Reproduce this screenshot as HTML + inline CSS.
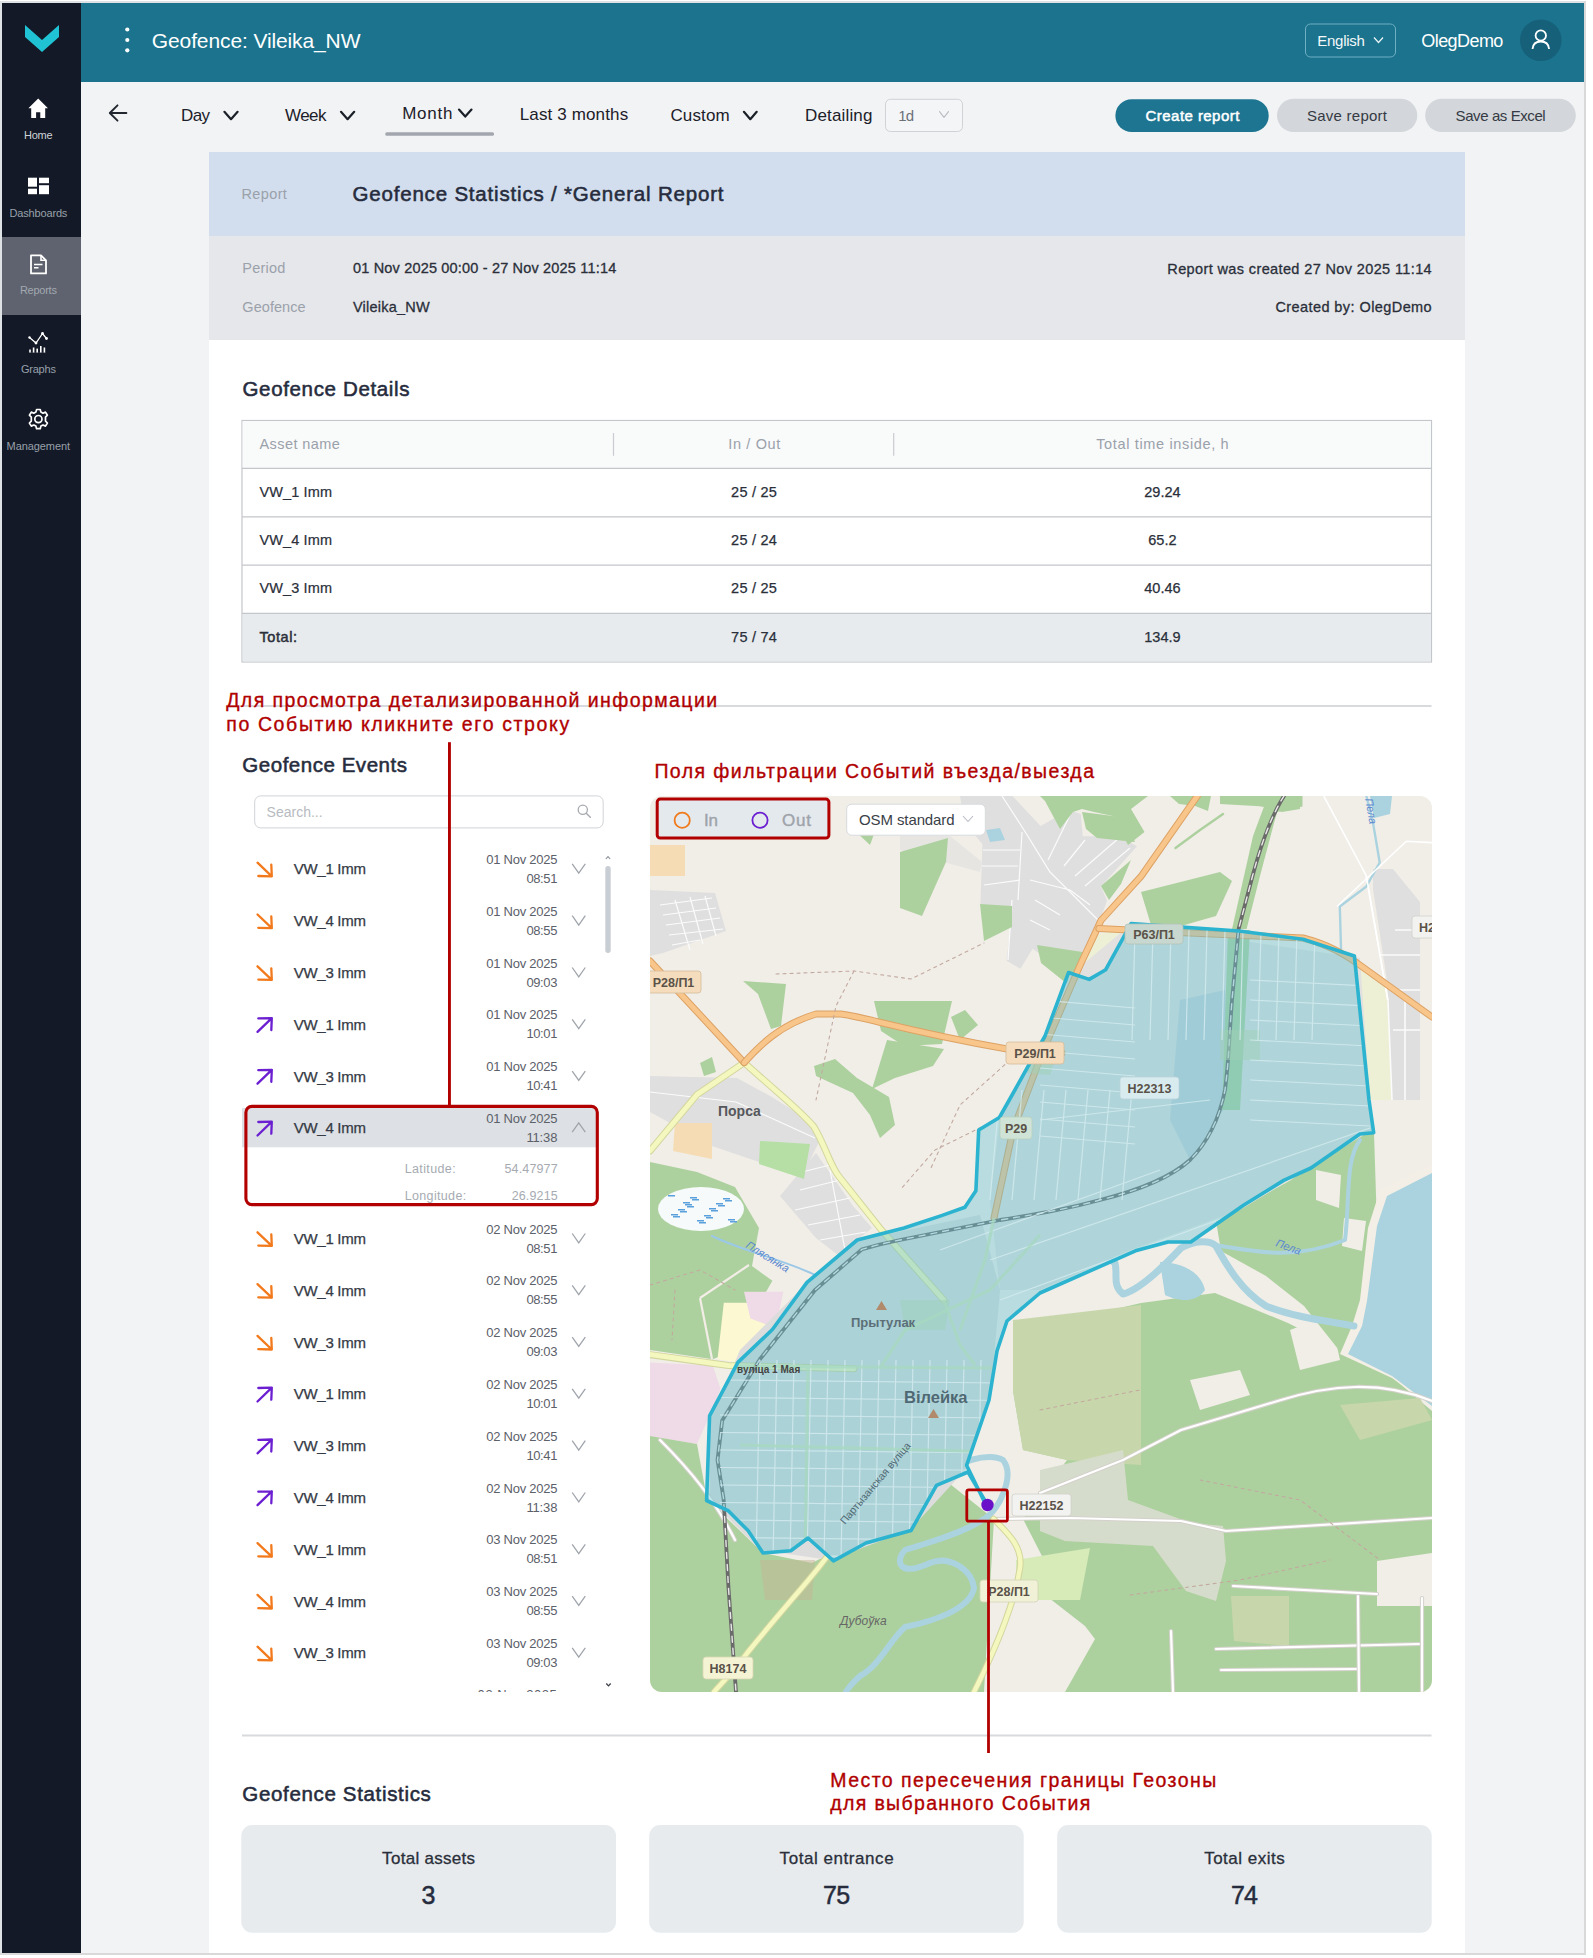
<!DOCTYPE html>
<html><head><meta charset="utf-8"><title>Geofence report</title>
<style>
html,body{margin:0;padding:0;width:1593px;height:1958px;overflow:hidden;background:#fff;}
body{position:relative;font-family:"Liberation Sans", sans-serif;}
div{box-sizing:border-box;}
svg{position:absolute;overflow:visible;}
</style></head><body>
<div style="position:absolute;left:0px;top:0px;width:1593px;height:1958px;background:#ffffff;"></div>
<div style="position:absolute;left:0px;top:1px;width:1586px;height:1954px;background:#d9d9d9;"></div>
<div style="position:absolute;left:0px;top:1px;width:1584px;height:1952px;background:#dfe2e5;"></div>
<div style="position:absolute;left:2px;top:3px;width:1582px;height:1950px;background:#f2f3f5;"></div>
<div style="position:absolute;left:2px;top:3px;width:79px;height:1950px;background:#131926;"></div>
<div style="position:absolute;left:2px;top:237px;width:79px;height:78px;background:#5e636f;"></div>
<div style="position:absolute;left:81px;top:3px;width:1503px;height:79px;background:#1b738d;"></div>
<div style="position:absolute;left:209px;top:152px;width:1256px;height:1801px;background:#ffffff;"></div>
<div style="position:absolute;left:209px;top:152px;width:1256px;height:84px;background:#d2deed;"></div>
<div style="position:absolute;left:209px;top:236px;width:1256px;height:104px;background:#e6e7ea;"></div>
<svg style="left:0;top:0" width="90" height="460" viewBox="0 0 90 460"><polygon points="25,25 42,40 59,25 59,37 42,52 25,37" fill="#1fc3d3"/><path d="M38.2,98.6 L48,108.2 L45.2,108.2 L45.2,118 L40.3,118 L40.3,112.3 L36.1,112.3 L36.1,118 L31.2,118 L31.2,108.2 L28.4,108.2 Z" fill="#ffffff"/><rect x="28" y="177.7" width="9" height="9" fill="#fff"/><rect x="28" y="188.7" width="9" height="5.5" fill="#fff"/><rect x="39" y="177.7" width="10" height="5.5" fill="#fff"/><rect x="39" y="185.2" width="10" height="9" fill="#fff"/><path d="M31,255.3 L41,255.3 L46,260.3 L46,273.4 L31,273.4 Z" fill="none" stroke="#fff" stroke-width="1.8" stroke-linejoin="round"/><path d="M41,255.3 L41,260.3 L46,260.3" fill="none" stroke="#fff" stroke-width="1.6"/><path d="M34,264.5 L42.5,264.5 M34,267.8 L38.5,267.8" stroke="#fff" stroke-width="1.4"/><polyline points="29.5,337.5 36,343 42.5,333.5 46.5,338.5" fill="none" stroke="#fff" stroke-width="1.3"/><circle cx="36" cy="343" r="1.4" fill="#fff"/><circle cx="42.5" cy="333.5" r="1.4" fill="#fff"/><circle cx="46.5" cy="338.5" r="1.4" fill="#fff"/><circle cx="29.5" cy="337.5" r="1.2" fill="#fff"/><rect x="29.2" y="349.5" width="1.6" height="3" fill="#fff"/><rect x="32.8" y="347.5" width="1.6" height="5" fill="#fff"/><rect x="36.4" y="348.6" width="1.6" height="3.9" fill="#fff"/><rect x="40" y="346" width="1.6" height="6.5" fill="#fff"/><rect x="43.6" y="347.5" width="1.6" height="5" fill="#fff"/><rect x="29" y="352" width="17" height="0.1" fill="#fff"/><g transform="translate(38.4,419.1)" fill="none" stroke="#fff" stroke-width="1.7"><path d="M-1.8,-9.6 L1.8,-9.6 L2.5,-7 L4.6,-5.9 L7.1,-7 L9.0,-3.9 L7.1,-2.0 L7.1,2.0 L9.0,3.9 L7.1,7 L4.6,5.9 L2.5,7 L1.8,9.6 L-1.8,9.6 L-2.5,7 L-4.6,5.9 L-7.1,7 L-9.0,3.9 L-7.1,2.0 L-7.1,-2.0 L-9.0,-3.9 L-7.1,-7 L-4.6,-5.9 L-2.5,-7 Z" stroke-linejoin="round"/><circle r="3.6"/></g></svg>
<svg style="left:0;top:0" width="1593" height="82"><circle cx="127.3" cy="29.5" r="2.1" fill="#fff"/><circle cx="127.3" cy="40" r="2.1" fill="#fff"/><circle cx="127.3" cy="50.3" r="2.1" fill="#fff"/><rect x="1305.5" y="24" width="90" height="33" rx="5" fill="none" stroke="#6fb0c4" stroke-width="1"/><polyline points="1374,37.5 1378.5,42.5 1383,37.5" fill="none" stroke="#e8f3f6" stroke-width="1.3"/><circle cx="1540.8" cy="40.2" r="20.8" fill="#16607a"/><circle cx="1540.8" cy="35.5" r="5.2" fill="none" stroke="#fff" stroke-width="1.8"/><path d="M1532.5,49 C1533,43.5 1536.5,41.5 1540.8,41.5 C1545,41.5 1548.6,43.5 1549.1,49" fill="none" stroke="#fff" stroke-width="1.8"/></svg>
<svg style="left:0;top:82" width="1593" height="70" viewBox="0 82 1593 70"><path d="M126.4,113 L110,113 M117.5,105.3 L109.8,113 L117.5,120.7" fill="none" stroke="#22262e" stroke-width="1.9" stroke-linecap="round" stroke-linejoin="round"/><polyline points="224.4,111.8 231.0,119.2 237.6,111.8" fill="none" stroke="#1b1f27" stroke-width="2.2" stroke-linecap="round" stroke-linejoin="round"/><polyline points="341,111.8 347.6,119.2 354.2,111.8" fill="none" stroke="#1b1f27" stroke-width="2.2" stroke-linecap="round" stroke-linejoin="round"/><polyline points="459,109.6 465.25,116.6 471.5,109.6" fill="none" stroke="#1b1f27" stroke-width="2.2" stroke-linecap="round" stroke-linejoin="round"/><polyline points="743.9,111.8 750.3,119.2 756.7,111.8" fill="none" stroke="#1b1f27" stroke-width="2.2" stroke-linecap="round" stroke-linejoin="round"/><rect x="385.3" y="132.2" width="108.7" height="3.6" rx="1.5" fill="#a3a6ad"/><rect x="885.5" y="99.3" width="77" height="32.2" rx="5" fill="#f4f5f6" stroke="#cfd2d6" stroke-width="1"/><polyline points="939.5,111.6 944.0,117.4 948.5,111.6" fill="none" stroke="#b9bcc2" stroke-width="1.1" stroke-linecap="round" stroke-linejoin="round"/><rect x="1115.4" y="99.3" width="153.3" height="32.7" rx="16.3" fill="#1d7591"/><rect x="1277" y="98.8" width="140.3" height="33.2" rx="16.6" fill="#d3d6da"/><rect x="1425.2" y="98.8" width="150.6" height="33.2" rx="16.6" fill="#d3d6da"/></svg>
<svg style="left:0;top:0" width="1593" height="700"><rect x="242" y="420.5" width="1189.5" height="241.5" fill="#ffffff" stroke="#c3c6ca" stroke-width="1.2"/><rect x="242.6" y="421.1" width="1188.3" height="47" fill="#f9fafa"/><rect x="242.6" y="613.6" width="1188.3" height="47.8" fill="#e7ebee"/><path d="M242,468.3 H1431.5 M242,516.8 H1431.5 M242,565.2 H1431.5 M242,613.4 H1431.5" stroke="#c3c6ca" stroke-width="1.2"/><path d="M613.5,433 V455.7 M893.7,433 V455.7" stroke="#c9ccd0" stroke-width="1.2"/><path d="M242,706 H1431.5" stroke="#d8dadd" stroke-width="1.8"/></svg>
<svg style="left:0;top:0" width="1593" height="1958"><rect x="254.7" y="795.9" width="348.5" height="32" rx="6" fill="#fff" stroke="#d0d3d7" stroke-width="1"/><circle cx="582.8" cy="809.8" r="4.6" fill="none" stroke="#a6aab0" stroke-width="1.3"/><path d="M586.2,813.2 L590.3,817.3" stroke="#a6aab0" stroke-width="1.4" stroke-linecap="round"/></svg>
<svg style="left:0;top:0" width="1593" height="1958"><defs><clipPath id="lc"><rect x="236" y="840" width="370" height="851.5"/></clipPath></defs><rect x="242" y="1108" width="354.5" height="39.3" fill="#dde0e4"/><g clip-path="url(#lc)"><path d="M257.5,862.7 L271.8,876.3 M271.3,864.7 L271.8,876.3 L258.3,876.0" fill="none" stroke="#f27a1c" stroke-width="2.3" stroke-linecap="round" stroke-linejoin="round"/><polyline points="572.2,863.9 578.75,873.2 585.3,863.9" fill="none" stroke="#a0a5ac" stroke-width="1.3"/><path d="M257.5,914.5 L271.8,928.1 M271.3,916.5 L271.8,928.1 L258.3,927.8" fill="none" stroke="#f27a1c" stroke-width="2.3" stroke-linecap="round" stroke-linejoin="round"/><polyline points="572.2,915.7 578.75,925.0 585.3,915.7" fill="none" stroke="#a0a5ac" stroke-width="1.3"/><path d="M257.5,966.3 L271.8,979.9 M271.3,968.3 L271.8,979.9 L258.3,979.6" fill="none" stroke="#f27a1c" stroke-width="2.3" stroke-linecap="round" stroke-linejoin="round"/><polyline points="572.2,967.5 578.75,976.8 585.3,967.5" fill="none" stroke="#a0a5ac" stroke-width="1.3"/><path d="M257.5,1031.9 L271.8,1018.1 M258.3,1018.4 L271.8,1018.1 L271.3,1030.1" fill="none" stroke="#6b1fd1" stroke-width="2.3" stroke-linecap="round" stroke-linejoin="round"/><polyline points="572.2,1019.3 578.75,1028.6 585.3,1019.3" fill="none" stroke="#a0a5ac" stroke-width="1.3"/><path d="M257.5,1083.7 L271.8,1069.9 M258.3,1070.2 L271.8,1069.9 L271.3,1081.9" fill="none" stroke="#6b1fd1" stroke-width="2.3" stroke-linecap="round" stroke-linejoin="round"/><polyline points="572.2,1071.1 578.75,1080.4 585.3,1071.1" fill="none" stroke="#a0a5ac" stroke-width="1.3"/><path d="M257.5,1135.5 L271.8,1121.7 M258.3,1122.0 L271.8,1121.7 L271.3,1133.7" fill="none" stroke="#6b1fd1" stroke-width="2.3" stroke-linecap="round" stroke-linejoin="round"/><polyline points="572.2,1132.2 578.75,1122.9 585.3,1132.2" fill="none" stroke="#a0a5ac" stroke-width="1.3"/><path d="M257.5,1232.3 L271.8,1245.9 M271.3,1234.3 L271.8,1245.9 L258.3,1245.6" fill="none" stroke="#f27a1c" stroke-width="2.3" stroke-linecap="round" stroke-linejoin="round"/><polyline points="572.2,1233.5 578.75,1242.8 585.3,1233.5" fill="none" stroke="#a0a5ac" stroke-width="1.3"/><path d="M257.5,1284.1 L271.8,1297.7 M271.3,1286.1 L271.8,1297.7 L258.3,1297.4" fill="none" stroke="#f27a1c" stroke-width="2.3" stroke-linecap="round" stroke-linejoin="round"/><polyline points="572.2,1285.3 578.75,1294.6 585.3,1285.3" fill="none" stroke="#a0a5ac" stroke-width="1.3"/><path d="M257.5,1335.9 L271.8,1349.5 M271.3,1337.9 L271.8,1349.5 L258.3,1349.2" fill="none" stroke="#f27a1c" stroke-width="2.3" stroke-linecap="round" stroke-linejoin="round"/><polyline points="572.2,1337.1 578.75,1346.4 585.3,1337.1" fill="none" stroke="#a0a5ac" stroke-width="1.3"/><path d="M257.5,1401.5 L271.8,1387.7 M258.3,1388.0 L271.8,1387.7 L271.3,1399.7" fill="none" stroke="#6b1fd1" stroke-width="2.3" stroke-linecap="round" stroke-linejoin="round"/><polyline points="572.2,1388.9 578.75,1398.2 585.3,1388.9" fill="none" stroke="#a0a5ac" stroke-width="1.3"/><path d="M257.5,1453.3 L271.8,1439.5 M258.3,1439.8 L271.8,1439.5 L271.3,1451.5" fill="none" stroke="#6b1fd1" stroke-width="2.3" stroke-linecap="round" stroke-linejoin="round"/><polyline points="572.2,1440.7 578.75,1450.0 585.3,1440.7" fill="none" stroke="#a0a5ac" stroke-width="1.3"/><path d="M257.5,1505.1 L271.8,1491.3 M258.3,1491.6 L271.8,1491.3 L271.3,1503.3" fill="none" stroke="#6b1fd1" stroke-width="2.3" stroke-linecap="round" stroke-linejoin="round"/><polyline points="572.2,1492.5 578.75,1501.8 585.3,1492.5" fill="none" stroke="#a0a5ac" stroke-width="1.3"/><path d="M257.5,1543.1 L271.8,1556.7 M271.3,1545.1 L271.8,1556.7 L258.3,1556.4" fill="none" stroke="#f27a1c" stroke-width="2.3" stroke-linecap="round" stroke-linejoin="round"/><polyline points="572.2,1544.3 578.75,1553.6 585.3,1544.3" fill="none" stroke="#a0a5ac" stroke-width="1.3"/><path d="M257.5,1594.9 L271.8,1608.5 M271.3,1596.9 L271.8,1608.5 L258.3,1608.2" fill="none" stroke="#f27a1c" stroke-width="2.3" stroke-linecap="round" stroke-linejoin="round"/><polyline points="572.2,1596.1 578.75,1605.4 585.3,1596.1" fill="none" stroke="#a0a5ac" stroke-width="1.3"/><path d="M257.5,1646.7 L271.8,1660.3 M271.3,1648.7 L271.8,1660.3 L258.3,1660.0" fill="none" stroke="#f27a1c" stroke-width="2.3" stroke-linecap="round" stroke-linejoin="round"/><polyline points="572.2,1647.9 578.75,1657.2 585.3,1647.9" fill="none" stroke="#a0a5ac" stroke-width="1.3"/><path d="M257.5,1698.5 L271.8,1712.1 M271.3,1700.5 L271.8,1712.1 L258.3,1711.8" fill="none" stroke="#f27a1c" stroke-width="2.3" stroke-linecap="round" stroke-linejoin="round"/><polyline points="572.2,1699.7 578.75,1709.0 585.3,1699.7" fill="none" stroke="#a0a5ac" stroke-width="1.3"/></g><rect x="605.3" y="866" width="5.4" height="87" rx="2.7" fill="#c9ced4"/><polyline points="605.8,859 608,856.6 610.2,859" fill="none" stroke="#8a8f96" stroke-width="1.1"/><polyline points="606.3,1683.5 608.5,1685.9 610.7,1683.5" fill="none" stroke="#3b3f46" stroke-width="1.3"/><rect x="245.9" y="1106.4" width="351.4" height="98.2" rx="6" fill="none" stroke="#b20000" stroke-width="3.1"/><rect x="448" y="742.2" width="2.9" height="364" fill="#b20000"/></svg>
<div style="position:absolute;left:470px;top:1686px;width:87.4px;height:5.5px;overflow:hidden"><div style="position:absolute;right:0;top:1.5px;font-size:13px;line-height:13px;color:#5b6069;letter-spacing:0.55px;white-space:nowrap">03 Nov 2025</div></div>
<svg style="left:0;top:0" width="1593" height="1958"><path d="M242,1735.5 H1431.5" stroke="#d8dadd" stroke-width="1.8"/><rect x="241.3" y="1825" width="374.7" height="107.8" rx="11" fill="#e7ebee"/><rect x="649.2" y="1825" width="374.5" height="107.8" rx="11" fill="#e7ebee"/><rect x="1057.2" y="1825" width="374.5" height="107.8" rx="11" fill="#e7ebee"/></svg>
<svg style="left:650px;top:796px" width="782" height="896" viewBox="650 796 782 896"><defs><clipPath id="mc"><rect x="650" y="796" width="782" height="896" rx="12"/></clipPath></defs><g clip-path="url(#mc)"><rect x="650" y="796" width="782" height="896" fill="#f1eee8"/><polygon points="650,890 715,893 726,931 663,953 650,956" fill="#e0dfdf" /><path d="M660,905 L712,898 M663,915 L716,908 M666,925 L720,918 M669,935 L723,929 M672,945 L700,940 M675,900 L690,950 M690,897 L703,944 M705,896 L716,936" fill="none" stroke="#fbfbfb" stroke-width="1.2"/><polygon points="960,796 1012.5,796 1040.6,826 1068.7,810 1080.8,814 1082.8,836.2 1119,836.2 1137,846.2 1101,886.4 1107,900.5 1088.8,952.7 1052.7,962.7 1032.6,948.7 1020.5,968.8 1006.5,960.7 1012.5,908.5 980.4,904.5 982.4,844.2 964.3,822.1" fill="#e0dfdf" /><polygon points="900,836 950,836 982,862 980,872 900,850" fill="#e6e5e2" /><path d="M1002,796 L1024,830 L1050,872 L1098,920 M983,850 L1020,850 M982,866 L1018,866 M984,885 L1020,880 M1022,832 L1018,900 M1030,880 L1070,890 L1090,905 M1035,900 L1060,915 M1030,920 L1050,930 M1048,860 L1070,815 M1064,866 L1085,840 M1075,876 L1119,838 M1085,886 L1130,848 M1012,900 L1008,960" fill="none" stroke="#fbfbfb" stroke-width="1.2"/><polygon points="650,845 685,845 685,876 650,876" fill="#f5dcb4" /><polygon points="1354,956 1392,986 1392,1100 1367,1100" fill="#eef0d5" /><polygon points="1078,980 1095,935 1128,928 1110,970 1090,980" fill="#eef0d5" /><polygon points="1373,869 1393,869 1420,902 1420,1100 1392,1100 1387,981 1373,889" fill="#e0dfdf" /><path d="M1366,876 L1388,1000 L1392,1100 M1395,930 L1420,930 M1380,955 L1420,955 M1393,990 L1420,990 M1393,1030 L1420,1030 M1405,1000 L1405,1100" fill="none" stroke="#fbfbfb" stroke-width="1.6"/><polygon points="900,852 948,838 946,862 922,916 900,908" fill="#add19e" /><polygon points="980,904 1012,906 1012,927 984,941" fill="#add19e" /><polygon points="1040,796 1148,796 1131,809 1144.5,832 1128,845 1113,816 1094,812 1082,809 1073,812 1060,829 1045,801" fill="#add19e" /><polygon points="1082,812 1113,816 1131,833 1135,842 1097,838 1086,829" fill="#add19e" /><polygon points="1170,796 1211,796 1208,811 1195,806 1179,804" fill="#add19e" /><polygon points="1219,796 1300,796 1300,809 1282,812 1265,807 1236,802" fill="#add19e" /><polygon points="1101,886 1131,860 1121,884 1109,900" fill="#add19e" /><polygon points="1141,892 1220,872 1232,881 1216,916 1181,926 1151,925" fill="#add19e" /><polygon points="1037,945 1089,953 1071,987 1041,963" fill="#add19e" /><polygon points="1220,796 1302.5,796 1302.5,806.6 1277,812 1260,876 1246.6,929 1232,929 1253,836 1264,806.6 1220,804" fill="#add19e" /><path d="M1175.5,848 L1200,830 L1223,814" fill="none" stroke="#add19e" stroke-width="2.5" stroke-linecap="round" stroke-linejoin="round" /><polygon points="854,830 880,818 870,845" fill="#add19e" /><polygon points="743,981 786,984 781,1026 771,1029 758,994" fill="#add19e" /><polygon points="874,1001 952,1001 942,1044 904,1046 881,1031" fill="#add19e" /><polygon points="951,1017 965,1010 978,1025 960,1040" fill="#add19e" /><polygon points="814,1066 835,1059 857,1078 889,1097 895,1125 880,1138 870,1115 853,1093 816,1076" fill="#add19e" /><polygon points="887,1040 944,1049 933,1066 895,1078 872,1089" fill="#add19e" /><polygon points="700,1063 712,1057 716,1072 704,1076" fill="#add19e" /><path d="M1366.4,796 L1373,822.6 L1379.7,862.5 L1366.4,886.5 L1339.8,906.5 L1341,947.7 L1342,1100" fill="none" stroke="#aad3df" stroke-width="2.4" stroke-linecap="round" stroke-linejoin="round" /><polygon points="1370,796 1392,796 1390,814 1374,818" fill="#aad3df" /><path d="M1323.8,796 L1366.4,875.9 L1387.7,1000 M1337,906.5 L1406.3,841.2 L1432,842.6" fill="none" stroke="#ffffff" stroke-width="1.6"/><polygon points="986,830 1000,828 1005,840 990,842" fill="#aad3df" /><polygon points="650,1076 737,1078 772,1097 816,1125 820,1140 804,1172 759,1162 712,1146 650,1112" fill="#e0dfdf" /><polygon points="780,1196 816,1153 853,1206 872,1228 838,1255 816,1238" fill="#e0dfdf" /><path d="M650,1092 L736,1102 L815,1138 M790,1175 L830,1165 M800,1190 L840,1180 M795,1210 L850,1198 M808,1225 L860,1215 M820,1240 L866,1232 M830,1170 L845,1250" fill="none" stroke="#fbfbfb" stroke-width="1.2"/><polygon points="675,1123 712,1123 712,1159 673,1151" fill="#f5dcb4" /><polygon points="760,1141 810,1144 804,1179 759,1164" fill="#b6dfa6" /><polygon points="650,1162 697,1172 735,1187 759,1228 752,1266 772.4,1280.8 759.9,1302.8 734.7,1306 734.7,1349.9 712.8,1359.3 650,1349.9" fill="#add19e" /><polygon points="723.8,1302.8 747.3,1302.8 772.4,1327.9 737.9,1362.4 717.5,1359.3" fill="#fcf8d2" /><polygon points="744,1291.8 783.4,1291.8 775.5,1327.9 750.4,1318.5" fill="#eedbe7" /><polygon points="650,1362.4 712.8,1365.5 720.6,1389 709.6,1415.8 697,1444 650,1436.2" fill="#eedbe7" /><polygon points="650,1436 697,1444 707,1499 763,1553 812,1563 896,1519 945,1480 994,1519 984,1692 650,1692" fill="#add19e" /><path d="M700,1298 L749,1265 M700,1298 L712,1359" fill="none" stroke="#f2ede6" stroke-width="2.2"/><ellipse cx="701" cy="1209" rx="43" ry="22" fill="#f7fafa"/><rect x="668" y="1195" width="7" height="1.5" fill="#5aa0dc"/><rect x="687" y="1206" width="7" height="1.5" fill="#5aa0dc"/><rect x="706" y="1217" width="7" height="1.5" fill="#5aa0dc"/><rect x="725" y="1200" width="7" height="1.5" fill="#5aa0dc"/><rect x="680" y="1211" width="7" height="1.5" fill="#5aa0dc"/><rect x="699" y="1222" width="7" height="1.5" fill="#5aa0dc"/><rect x="718" y="1205" width="7" height="1.5" fill="#5aa0dc"/><rect x="673" y="1216" width="7" height="1.5" fill="#5aa0dc"/><rect x="692" y="1199" width="7" height="1.5" fill="#5aa0dc"/><rect x="711" y="1210" width="7" height="1.5" fill="#5aa0dc"/><rect x="730" y="1221" width="7" height="1.5" fill="#5aa0dc"/><rect x="685" y="1204" width="7" height="1.5" fill="#5aa0dc"/><rect x="704" y="1215" width="7" height="1.5" fill="#5aa0dc"/><rect x="723" y="1198" width="7" height="1.5" fill="#5aa0dc"/><rect x="678" y="1209" width="7" height="1.5" fill="#5aa0dc"/><rect x="697" y="1220" width="7" height="1.5" fill="#5aa0dc"/><rect x="716" y="1203" width="7" height="1.5" fill="#5aa0dc"/><rect x="671" y="1214" width="7" height="1.5" fill="#5aa0dc"/><rect x="690" y="1197" width="7" height="1.5" fill="#5aa0dc"/><rect x="709" y="1208" width="7" height="1.5" fill="#5aa0dc"/><rect x="728" y="1219" width="7" height="1.5" fill="#5aa0dc"/><rect x="683" y="1202" width="7" height="1.5" fill="#5aa0dc"/><path d="M712,1236 C740,1250 790,1262 815,1275" fill="none" stroke="#9cc8e8" stroke-width="2" stroke-linecap="round" stroke-linejoin="round" /><polygon points="1033,1328 1141,1303 1215,1293 1288,1323 1386,1372 1432,1411 1432,1692 994,1692 1028,1627 1043,1558 1023,1519 1067,1460 1023,1450 1013,1391 1043,1332" fill="#add19e" /><polygon points="1013,1320 1141,1305 1141,1465 1067,1460 1023,1450 1013,1391" fill="#c8d7ab" /><polygon points="1340,1405 1420,1398 1432,1420 1360,1440" fill="#c8d7ab" /><polygon points="1040,1591 1085,1626 1095,1639 1065,1692 1040,1692" fill="#f1eee8" /><polygon points="1000,1588 1050,1588 1040,1692 994,1692" fill="#f1eee8" /><polygon points="1377,1561 1432,1553 1432,1606 1377,1606" fill="#f1eee8" /><polygon points="1231,1596 1289,1596 1289,1646 1234,1641" fill="#c8d7ab" /><polygon points="1070,1463 1123,1450 1128,1500 1191,1523 1223,1526 1226,1561 1216,1601 1186,1591 1153,1546 1065,1541 1040,1531 1040,1470" fill="#d6dccb" /><polygon points="1190,1380 1240,1370 1250,1395 1200,1410" fill="#f1eee8" /><polygon points="1290,1330 1330,1315 1340,1360 1300,1370" fill="#f1eee8" /><polygon points="1016,1560 1090,1548 1080,1600 1016,1600" fill="#d6ebb8" /><polygon points="760,1560 815,1560 812,1600 765,1600" fill="#c4b594" opacity="0.5"/><polygon points="1216,1221 1291,1180 1354,1134 1374,1133 1377,1226 1364,1326 1342,1354 1304,1306 1266,1276 1221,1251" fill="#add19e" /><polygon points="1316,1170 1341,1175 1339,1208 1316,1200" fill="#f1eee8" /><polygon points="1344,1218 1366,1221 1362,1251 1342,1246" fill="#f1eee8" /><polygon points="1432,1165 1380,1190 1368,1228 1360,1300 1352,1326 1340,1354 1392,1378 1432,1407" fill="#f4efe6" /><polygon points="1432,1173 1387,1196 1377,1226 1367,1301 1362,1326 1348,1354 1392,1376 1432,1406" fill="#aad3df" /><path d="M1040,1251 C1070,1246 1100,1250 1115,1263 C1118,1275 1112,1285 1123,1294 C1140,1290 1165,1265 1181,1248 C1195,1240 1210,1240 1216,1246 C1225,1262 1240,1290 1266,1306 C1290,1316 1320,1320 1354,1326" fill="none" stroke="#aad3df" stroke-width="7" stroke-linecap="round" stroke-linejoin="round" /><path d="M1160,1262 C1175,1262 1200,1268 1205,1290 C1195,1305 1175,1300 1165,1295 Z" fill="#aad3df"/><path d="M944,1480 C955,1460 990,1452 1003,1460 C1015,1475 1000,1510 984,1519 C960,1535 920,1545 905,1550 C895,1560 898,1578 930,1563 C950,1555 972,1570 974,1588 C970,1610 930,1622 905,1627 C890,1640 880,1665 860,1676 C850,1685 846,1692 846,1692" fill="none" stroke="#aad3df" stroke-width="6" stroke-linecap="round" stroke-linejoin="round" /><path d="M1215,1245 C1250,1250 1290,1262 1345,1240 C1350,1200 1345,1160 1360,1140" fill="none" stroke="#aad3df" stroke-width="4" stroke-linecap="round" stroke-linejoin="round" /><polygon points="710,1420 740,1350 810,1280 860,1240 980,1215 1000,1290 990,1400 965,1470 910,1530 830,1560 760,1550 710,1500" fill="#dcdcdc" /><polygon points="1045,1040 1070,975 1130,925 1360,958 1372,1130 1240,1210 1130,1250 1040,1290 1000,1290 990,1200 1000,1120" fill="#e2e1df" /><polygon points="1180,1000 1225,990 1230,1100 1190,1160 1170,1120" fill="#c9d3dd" /><polygon points="1228,930 1250,930 1240,1110 1222,1110" fill="#add19e" /><path d="M1040,1493 L1123,1460 L1181,1430 L1281,1400 C1330,1385 1380,1380 1432,1401" fill="none" stroke="#d4d1cc" stroke-width="4.2" stroke-linecap="round" stroke-linejoin="round" /><path d="M1040,1493 L1123,1460 L1181,1430 L1281,1400 C1330,1385 1380,1380 1432,1401" fill="none" stroke="#ffffff" stroke-width="2.2" stroke-linecap="round" stroke-linejoin="round" /><path d="M993,1519 L1070,1518 L1181,1521 L1226,1531 L1432,1518" fill="none" stroke="#d4d1cc" stroke-width="4.2" stroke-linecap="round" stroke-linejoin="round" /><path d="M993,1519 L1070,1518 L1181,1521 L1226,1531 L1432,1518" fill="none" stroke="#ffffff" stroke-width="2.2" stroke-linecap="round" stroke-linejoin="round" /><path d="M1233,1586 L1377,1594" fill="none" stroke="#d4d1cc" stroke-width="4.2" stroke-linecap="round" stroke-linejoin="round" /><path d="M1233,1586 L1377,1594" fill="none" stroke="#ffffff" stroke-width="2.2" stroke-linecap="round" stroke-linejoin="round" /><path d="M1216,1649 L1419,1644" fill="none" stroke="#d4d1cc" stroke-width="4.2" stroke-linecap="round" stroke-linejoin="round" /><path d="M1216,1649 L1419,1644" fill="none" stroke="#ffffff" stroke-width="2.2" stroke-linecap="round" stroke-linejoin="round" /><path d="M1221,1670 L1357,1669" fill="none" stroke="#d4d1cc" stroke-width="4.2" stroke-linecap="round" stroke-linejoin="round" /><path d="M1221,1670 L1357,1669" fill="none" stroke="#ffffff" stroke-width="2.2" stroke-linecap="round" stroke-linejoin="round" /><path d="M1358,1596 L1359,1692" fill="none" stroke="#d4d1cc" stroke-width="4.2" stroke-linecap="round" stroke-linejoin="round" /><path d="M1358,1596 L1359,1692" fill="none" stroke="#ffffff" stroke-width="2.2" stroke-linecap="round" stroke-linejoin="round" /><path d="M1422,1598 L1422,1692" fill="none" stroke="#d4d1cc" stroke-width="4.2" stroke-linecap="round" stroke-linejoin="round" /><path d="M1422,1598 L1422,1692" fill="none" stroke="#ffffff" stroke-width="2.2" stroke-linecap="round" stroke-linejoin="round" /><path d="M1171,1631 L1173,1692" fill="none" stroke="#d4d1cc" stroke-width="4.2" stroke-linecap="round" stroke-linejoin="round" /><path d="M1171,1631 L1173,1692" fill="none" stroke="#ffffff" stroke-width="2.2" stroke-linecap="round" stroke-linejoin="round" /><path d="M660,1440 C690,1470 715,1500 735,1540" fill="none" stroke="#d4d1cc" stroke-width="4.2" stroke-linecap="round" stroke-linejoin="round" /><path d="M660,1440 C690,1470 715,1500 735,1540" fill="none" stroke="#ffffff" stroke-width="2.2" stroke-linecap="round" stroke-linejoin="round" /><path d="M993.6,1519 C1010,1535 1023,1548 1020,1568 C1015,1600 1000,1640 974,1692" fill="none" stroke="#d2d69e" stroke-width="6.5" stroke-linecap="round" stroke-linejoin="round" /><path d="M993.6,1519 C1010,1535 1023,1548 1020,1568 C1015,1600 1000,1640 974,1692" fill="none" stroke="#f4f7be" stroke-width="4.5" stroke-linecap="round" stroke-linejoin="round" /><path d="M826,1558 C810,1580 790,1600 748,1652 C735,1670 720,1685 714,1692" fill="none" stroke="#d2d69e" stroke-width="6.5" stroke-linecap="round" stroke-linejoin="round" /><path d="M826,1558 C810,1580 790,1600 748,1652 C735,1670 720,1685 714,1692" fill="none" stroke="#f4f7be" stroke-width="4.5" stroke-linecap="round" stroke-linejoin="round" /><path d="M744.2,1062.6 L697,1094.6 L650,1151" fill="none" stroke="#d2d69e" stroke-width="7" stroke-linecap="round" stroke-linejoin="round" /><path d="M744.2,1062.6 L697,1094.6 L650,1151" fill="none" stroke="#f4f7be" stroke-width="5" stroke-linecap="round" stroke-linejoin="round" /><path d="M744.2,1062.6 C780,1095 800,1110 813.8,1126.6 C825,1145 830,1165 838.3,1175.6 L881.6,1230.2 L943.8,1300" fill="none" stroke="#d2d69e" stroke-width="7" stroke-linecap="round" stroke-linejoin="round" /><path d="M744.2,1062.6 C780,1095 800,1110 813.8,1126.6 C825,1145 830,1165 838.3,1175.6 L881.6,1230.2 L943.8,1300" fill="none" stroke="#f4f7be" stroke-width="5" stroke-linecap="round" stroke-linejoin="round" /><path d="M650,1354.6 L728.5,1365.5 L854,1368.7" fill="none" stroke="#d2d69e" stroke-width="7" stroke-linecap="round" stroke-linejoin="round" /><path d="M650,1354.6 L728.5,1365.5 L854,1368.7" fill="none" stroke="#f4f7be" stroke-width="5" stroke-linecap="round" stroke-linejoin="round" /><path d="M650,961 L744.2,1062.6" fill="none" stroke="#dda264" stroke-width="7" stroke-linecap="round" stroke-linejoin="round" /><path d="M650,961 L744.2,1062.6" fill="none" stroke="#f8c58a" stroke-width="5" stroke-linecap="round" stroke-linejoin="round" /><path d="M744.2,1062.6 C760,1045 780,1025 816,1014 L841,1014 C870,1018 900,1030 1007,1049 L1062,1053" fill="none" stroke="#dda264" stroke-width="7" stroke-linecap="round" stroke-linejoin="round" /><path d="M744.2,1062.6 C760,1045 780,1025 816,1014 L841,1014 C870,1018 900,1030 1007,1049 L1062,1053" fill="none" stroke="#f8c58a" stroke-width="5" stroke-linecap="round" stroke-linejoin="round" /><path d="M1197.3,796 L1141,876.4 L1100.9,920.5 C1090,945 1082,960 1076.8,972.8 L1043,1051 L1013,1130 L994,1218" fill="none" stroke="#dda264" stroke-width="7" stroke-linecap="round" stroke-linejoin="round" /><path d="M1197.3,796 L1141,876.4 L1100.9,920.5 C1090,945 1082,960 1076.8,972.8 L1043,1051 L1013,1130 L994,1218" fill="none" stroke="#f8c58a" stroke-width="5" stroke-linecap="round" stroke-linejoin="round" /><path d="M1098.9,928.6 L1190,933 L1303,938 C1330,945 1345,955 1357,963 L1432,1017" fill="none" stroke="#dda264" stroke-width="7" stroke-linecap="round" stroke-linejoin="round" /><path d="M1098.9,928.6 L1190,933 L1303,938 C1330,945 1345,955 1357,963 L1432,1017" fill="none" stroke="#f8c58a" stroke-width="5" stroke-linecap="round" stroke-linejoin="round" /><path d="M1284,796 C1272,815 1262,840 1252,878 L1238.6,929 L1232,1000 C1229,1040 1229,1060 1225,1090 C1220,1115 1210,1140 1190,1160 C1170,1178 1140,1190 1100,1200 C1070,1208 1050,1212 1000,1220 L900,1240 C880,1244 870,1247 861.9,1249.4 L814.8,1290.2 L759.9,1359.3 L722.2,1420.5 L717.5,1460 L723.6,1499 L728.5,1588 L736,1692" fill="none" stroke="#6a6a6a" stroke-width="3.8" stroke-linecap="round" stroke-linejoin="round" /><path d="M1284,796 C1272,815 1262,840 1252,878 L1238.6,929 L1232,1000 C1229,1040 1229,1060 1225,1090 C1220,1115 1210,1140 1190,1160 C1170,1178 1140,1190 1100,1200 C1070,1208 1050,1212 1000,1220 L900,1240 C880,1244 870,1247 861.9,1249.4 L814.8,1290.2 L759.9,1359.3 L722.2,1420.5 L717.5,1460 L723.6,1499 L728.5,1588 L736,1692" fill="none" stroke="#e8e8e8" stroke-width="1.4" stroke-linecap="round" stroke-linejoin="round" stroke-dasharray="6 6"/><path d="M776,974 L854,971 L911,979 L984,943" fill="none" stroke="#c2a9a0" stroke-width="1.1" stroke-linecap="round" stroke-linejoin="round" stroke-dasharray="3 4"/><path d="M854,971 L836,1006 L816,1100" fill="none" stroke="#c2a9a0" stroke-width="1.1" stroke-linecap="round" stroke-linejoin="round" stroke-dasharray="3 4"/><path d="M1000,1118 L935,1150 L900,1190" fill="none" stroke="#c2a9a0" stroke-width="1.1" stroke-linecap="round" stroke-linejoin="round" stroke-dasharray="3 4"/><path d="M1010,1060 L960,1105 L930,1170" fill="none" stroke="#c2a9a0" stroke-width="1.1" stroke-linecap="round" stroke-linejoin="round" stroke-dasharray="3 4"/><path d="M1130,1595 L1240,1580 L1330,1560" fill="none" stroke="#c2a9a0" stroke-width="1.1" stroke-linecap="round" stroke-linejoin="round" stroke-dasharray="3 4"/><path d="M1200,1480 L1300,1500 L1380,1560" fill="none" stroke="#c2a9a0" stroke-width="1.1" stroke-linecap="round" stroke-linejoin="round" stroke-dasharray="3 4"/><path d="M650,1285 L700,1270 L735,1290" fill="none" stroke="#c2a9a0" stroke-width="1.1" stroke-linecap="round" stroke-linejoin="round" stroke-dasharray="3 4"/><path d="M675,1290 L672,1340" fill="none" stroke="#c2a9a0" stroke-width="1.1" stroke-linecap="round" stroke-linejoin="round" stroke-dasharray="3 4"/><path d="M1040,1410 L1090,1400 L1140,1390" fill="none" stroke="#c2a9a0" stroke-width="1.1" stroke-linecap="round" stroke-linejoin="round" stroke-dasharray="3 4"/><polygon points="1131,923.6 1239,931 1303,939.3 1354.4,956 1369,1100 1373.7,1132.7 1359.9,1134 1311,1168 1283.7,1180.4 1243.9,1205 1190.8,1242 1168,1242 1135.5,1250.8 1040,1293 1007,1321 997,1351 989,1400 966.6,1465.3 984,1501 987.5,1505 968,1472 936.5,1485.4 911,1530.6 866,1543 833.5,1560.8 808,1538 790.8,1550.8 763,1553 748,1530.6 728,1510.6 706.6,1500.5 708,1460 709.6,1415.8 737.9,1362.4 772.4,1329.5 807,1282.4 857.2,1240 904,1228 941.5,1215.6 964.9,1207.3 975.9,1190.7 978.7,1130 999.4,1117.5 1017.3,1085.7 1045,1036 1068.5,972.5 1089.2,979.4 1105.7,969.7" fill="#68c3d2" fill-opacity="0.42"/><clipPath id="gc"><polygon points="1131,923.6 1239,931 1303,939.3 1354.4,956 1369,1100 1373.7,1132.7 1359.9,1134 1311,1168 1283.7,1180.4 1243.9,1205 1190.8,1242 1168,1242 1135.5,1250.8 1040,1293 1007,1321 997,1351 989,1400 966.6,1465.3 984,1501 987.5,1505 968,1472 936.5,1485.4 911,1530.6 866,1543 833.5,1560.8 808,1538 790.8,1550.8 763,1553 748,1530.6 728,1510.6 706.6,1500.5 708,1460 709.6,1415.8 737.9,1362.4 772.4,1329.5 807,1282.4 857.2,1240 904,1228 941.5,1215.6 964.9,1207.3 975.9,1190.7 978.7,1130 999.4,1117.5 1017.3,1085.7 1045,1036 1068.5,972.5 1089.2,979.4 1105.7,969.7"/></clipPath><g clip-path="url(#gc)"><polygon points="1000,1035 1060,1045 1050,1075 1000,1070" fill="#9fd0b8" opacity="0.5"/><polygon points="1220,1030 1260,1030 1260,1060 1220,1060" fill="#9fd0b8" opacity="0.5"/><polygon points="900,1300 950,1300 945,1330 905,1330" fill="#9fd0b8" opacity="0.5"/><g stroke="#d5ecf0" stroke-width="1.2" opacity="0.8" fill="none"><path d="M720,1380.0 L1000,1383.0"/><path d="M720,1397.5 L1000,1400.5"/><path d="M720,1415.0 L1000,1418.0"/><path d="M720,1432.5 L1000,1435.5"/><path d="M720,1450.0 L1000,1453.0"/><path d="M720,1467.5 L1000,1470.5"/><path d="M720,1485.0 L1000,1488.0"/><path d="M720,1502.5 L1000,1505.5"/><path d="M720,1520.0 L1000,1523.0"/><path d="M720,1537.5 L1000,1540.5"/><path d="M720,1555.0 L1000,1558.0"/><path d="M760,1360 L756,1560"/><path d="M777,1360 L773,1560"/><path d="M794,1360 L790,1560"/><path d="M811,1360 L807,1560"/><path d="M828,1360 L824,1560"/><path d="M845,1360 L841,1560"/><path d="M862,1360 L858,1560"/><path d="M879,1360 L875,1560"/><path d="M896,1360 L892,1560"/><path d="M913,1360 L909,1560"/><path d="M930,1360 L926,1560"/><path d="M947,1360 L943,1560"/><path d="M964,1360 L960,1560"/><path d="M981,1360 L977,1560"/><path d="M1135,930 L1132,1040"/><path d="M1153,930 L1150,1040"/><path d="M1171,930 L1168,1040"/><path d="M1189,930 L1186,1040"/><path d="M1207,930 L1204,1040"/><path d="M1225,930 L1222,1040"/><path d="M1243,930 L1240,1040"/><path d="M1261,930 L1258,1040"/><path d="M1279,930 L1276,1040"/><path d="M1297,930 L1294,1040"/><path d="M1315,930 L1312,1040"/><path d="M1040,1000 L1135,1008"/><path d="M1040,1017 L1135,1025"/><path d="M1040,1034 L1135,1042"/><path d="M1040,1051 L1135,1059"/><path d="M1040,1068 L1135,1076"/><path d="M1040,1085 L1135,1093"/><path d="M1040,1102 L1135,1110"/><path d="M1040,1119 L1135,1127"/><path d="M1040,1136 L1135,1144"/><path d="M1250,980 L1370,986"/><path d="M1250,1000 L1370,1006"/><path d="M1250,1020 L1370,1026"/><path d="M1250,1040 L1370,1046"/><path d="M1250,1060 L1370,1066"/><path d="M1250,1080 L1370,1086"/><path d="M1250,1100 L1370,1106"/><path d="M1250,1120 L1370,1126"/><path d="M1000,1090 L990,1200"/><path d="M1022,1090 L1012,1200"/><path d="M1044,1090 L1034,1200"/><path d="M1066,1090 L1056,1200"/><path d="M1088,1090 L1078,1200"/><path d="M1110,1090 L1100,1200"/><path d="M1132,1090 L1122,1200"/><path d="M990,1260 L1370,1128"/><path d="M1000,1300 L1240,1212"/><path d="M940,1250 L1160,1170"/><path d="M1040,1120 L1210,1100"/></g><g stroke="#a7d8c0" stroke-width="3.2" opacity="0.75" fill="none"><path d="M709,1366 L1000,1368"/><path d="M740,1445 L1000,1452"/><path d="M808,1365 L805,1560"/><path d="M943.8,1300 L960,1345 L975,1365"/><path d="M994,1218 L985,1260 L960,1330"/><path d="M880,1368 L905,1330 L990,1290 L1040,1235"/></g></g><polygon points="1131,923.6 1239,931 1303,939.3 1354.4,956 1369,1100 1373.7,1132.7 1359.9,1134 1311,1168 1283.7,1180.4 1243.9,1205 1190.8,1242 1168,1242 1135.5,1250.8 1040,1293 1007,1321 997,1351 989,1400 966.6,1465.3 984,1501 987.5,1505 968,1472 936.5,1485.4 911,1530.6 866,1543 833.5,1560.8 808,1538 790.8,1550.8 763,1553 748,1530.6 728,1510.6 706.6,1500.5 708,1460 709.6,1415.8 737.9,1362.4 772.4,1329.5 807,1282.4 857.2,1240 904,1228 941.5,1215.6 964.9,1207.3 975.9,1190.7 978.7,1130 999.4,1117.5 1017.3,1085.7 1045,1036 1068.5,972.5 1089.2,979.4 1105.7,969.7" fill="none" stroke="#2bb3cf" stroke-width="3.6" stroke-linejoin="round"/><rect x="646" y="971" width="55" height="22" rx="3" fill="#f4dcbc" stroke="#d6bd9c" stroke-width="0.8"/><text x="673.5" y="986.5" font-size="12.5" font-weight="700" text-anchor="middle" fill="#5a5248" font-family="Liberation Sans">P28/П1</text><rect x="1006" y="1042" width="58" height="22" rx="3" fill="#f4dcbc" stroke="#d6bd9c" stroke-width="0.8"/><text x="1035.0" y="1057.5" font-size="12.5" font-weight="700" text-anchor="middle" fill="#5a5248" font-family="Liberation Sans">P29/П1</text><rect x="1125" y="924" width="58" height="20" rx="3" fill="#c8d7cf" stroke="#b3c4bb" stroke-width="0.8"/><text x="1154.0" y="938.5" font-size="12.5" font-weight="700" text-anchor="middle" fill="#5a5248" font-family="Liberation Sans">P63/П1</text><rect x="1120" y="1077" width="59" height="22" rx="3" fill="#d8ecf0" stroke="#bcd4da" stroke-width="0.8"/><text x="1149.5" y="1092.5" font-size="12.5" font-weight="700" text-anchor="middle" fill="#5a5248" font-family="Liberation Sans">H22313</text><rect x="1000" y="1117" width="32" height="22" rx="3" fill="#cfe4d6" stroke="#b9d0c2" stroke-width="0.8"/><text x="1016.0" y="1132.5" font-size="12.5" font-weight="700" text-anchor="middle" fill="#5a5248" font-family="Liberation Sans">P29</text><rect x="1012" y="1494" width="59" height="22" rx="3" fill="#f2f2f0" stroke="#d0d0cc" stroke-width="0.8"/><text x="1041.5" y="1509.5" font-size="12.5" font-weight="700" text-anchor="middle" fill="#5a5248" font-family="Liberation Sans">H22152</text><rect x="980" y="1580" width="58" height="22" rx="3" fill="#f1f1d8" stroke="#d3d3b8" stroke-width="0.8"/><text x="1009.0" y="1595.5" font-size="12.5" font-weight="700" text-anchor="middle" fill="#5a5248" font-family="Liberation Sans">P28/П1</text><rect x="703" y="1657" width="50" height="22" rx="3" fill="#f4f3d4" stroke="#d8d6b4" stroke-width="0.8"/><text x="728.0" y="1672.5" font-size="12.5" font-weight="700" text-anchor="middle" fill="#5a5248" font-family="Liberation Sans">H8174</text><rect x="1412" y="916" width="30" height="22" rx="3" fill="#f2f2f0" stroke="#d0d0cc" stroke-width="0.8"/><text x="1427.0" y="931.5" font-size="12.5" font-weight="700" text-anchor="middle" fill="#5a5248" font-family="Liberation Sans">H2</text><text x="718" y="1116" font-size="14" fill="#55575c" font-family="Liberation Sans" font-weight="700">Порса</text><text x="851" y="1327" font-size="13" fill="#5c6f78" font-family="Liberation Sans" font-weight="700">Прытулак</text><text x="904" y="1403" font-size="16.5" fill="#4f6873" font-family="Liberation Sans" font-weight="700">Вілейка</text><text x="840" y="1625" font-size="12" fill="#666" font-family="Liberation Sans" font-style="italic">Дубоўка</text><text x="745" y="1247" font-size="11" fill="#5d8ad0" font-family="Liberation Sans" font-style="italic" transform="rotate(32 745 1247)">Плясянка</text><text x="1365" y="799" font-size="11" fill="#5d8ad0" font-family="Liberation Sans" font-style="italic" transform="rotate(80 1365 799)">Пела</text><text x="1275" y="1246" font-size="11" fill="#5d8ad0" font-family="Liberation Sans" font-style="italic" transform="rotate(20 1275 1246)">Пела</text><text x="845" y="1525" font-size="10.5" fill="#4f6873" font-family="Liberation Sans" transform="rotate(-50 845 1525)">Партызанская вуліца</text><text x="737" y="1373" font-size="10" fill="#444" font-family="Liberation Sans" font-weight="700">вуліца 1 Мая</text><polygon points="876,1310 881.5,1301 887,1310" fill="#b08a6a"/><polygon points="928,1418 933.5,1409 939,1418" fill="#b08a6a"/></g><rect x="657.2" y="799.1" width="171.7" height="38.9" rx="3" fill="#e4e9ee" stroke="#b20000" stroke-width="3"/><circle cx="682.2" cy="820.2" r="7.6" fill="none" stroke="#f07b1c" stroke-width="1.8"/><circle cx="760" cy="820.2" r="7.6" fill="none" stroke="#6b1fd1" stroke-width="1.8"/><rect x="846.7" y="804.2" width="138.6" height="31" rx="5" fill="#ffffff" stroke="#d7dadd" stroke-width="1"/><polyline points="963,816 968,821.5 973,816" fill="none" stroke="#b8bcc2" stroke-width="1.1"/><circle cx="987.5" cy="1505" r="6.2" fill="#6a10c9"/><rect x="966.8" y="1489.8" width="40.6" height="31.4" rx="2" fill="none" stroke="#b20000" stroke-width="2.8"/><rect x="987.1" y="1521" width="2.8" height="232" fill="#b20000"/></svg>
<div id="t0" style="position:absolute;left:24.1px;top:130.2px;font-size:11px;line-height:11px;font-weight:400;color:#cfd3d9;letter-spacing:-0.281px;white-space:nowrap;">Home</div>
<div id="t1" style="position:absolute;left:9.4px;top:207.7px;font-size:11px;line-height:11px;font-weight:400;color:#98a0ab;letter-spacing:-0.148px;white-space:nowrap;">Dashboards</div>
<div id="t2" style="position:absolute;left:19.9px;top:285.2px;font-size:11px;line-height:11px;font-weight:400;color:#a3a8b0;letter-spacing:-0.255px;white-space:nowrap;">Reports</div>
<div id="t3" style="position:absolute;left:20.9px;top:363.7px;font-size:11px;line-height:11px;font-weight:400;color:#98a0ab;letter-spacing:-0.216px;white-space:nowrap;">Graphs</div>
<div id="t4" style="position:absolute;left:6.6px;top:441.2px;font-size:11px;line-height:11px;font-weight:400;color:#98a0ab;letter-spacing:-0.080px;white-space:nowrap;">Management</div>
<div id="t5" style="position:absolute;left:151.8px;top:29.9px;font-size:21px;line-height:21px;font-weight:400;color:#ffffff;letter-spacing:-0.115px;white-space:nowrap;">Geofence: Vileika_NW</div>
<div id="t6" style="position:absolute;left:1317.3px;top:33.1px;font-size:15px;line-height:15px;font-weight:400;color:#f4f8fa;letter-spacing:-0.284px;white-space:nowrap;">English</div>
<div id="t7" style="position:absolute;left:1421.3px;top:31.9px;font-size:18px;line-height:18px;font-weight:400;color:#ffffff;letter-spacing:-0.564px;white-space:nowrap;">OlegDemo</div>
<div id="t8" style="position:absolute;left:181.0px;top:106.6px;font-size:17px;line-height:17px;font-weight:400;color:#1c2029;letter-spacing:-0.617px;white-space:nowrap;">Day</div>
<div id="t9" style="position:absolute;left:285.0px;top:106.6px;font-size:17px;line-height:17px;font-weight:400;color:#1c2029;letter-spacing:-0.552px;white-space:nowrap;">Week</div>
<div id="t10" style="position:absolute;left:402.2px;top:104.8px;font-size:17px;line-height:17px;font-weight:400;color:#1c2029;letter-spacing:0.762px;white-space:nowrap;">Month</div>
<div id="t11" style="position:absolute;left:519.7px;top:106.3px;font-size:17px;line-height:17px;font-weight:400;color:#1c2029;letter-spacing:0.143px;white-space:nowrap;">Last 3 months</div>
<div id="t12" style="position:absolute;left:670.4px;top:106.6px;font-size:17px;line-height:17px;font-weight:400;color:#1c2029;letter-spacing:0.144px;white-space:nowrap;">Custom</div>
<div id="t13" style="position:absolute;left:805.0px;top:106.6px;font-size:17px;line-height:17px;font-weight:400;color:#1c2029;letter-spacing:0.155px;white-space:nowrap;">Detailing</div>
<div id="t14" style="position:absolute;left:898.2px;top:107.9px;font-size:15px;line-height:15px;font-weight:400;color:#6b7079;letter-spacing:-0.688px;white-space:nowrap;">1d</div>
<div id="t15" style="position:absolute;left:1145.6px;top:107.9px;font-size:15px;line-height:15px;font-weight:400;color:#ffffff;letter-spacing:0.444px;white-space:nowrap;-webkit-text-stroke:0.5px #fff;">Create report</div>
<div id="t16" style="position:absolute;left:1307.0px;top:107.9px;font-size:15px;line-height:15px;font-weight:400;color:#353a44;letter-spacing:0.245px;white-space:nowrap;">Save report</div>
<div id="t17" style="position:absolute;left:1455.6px;top:107.9px;font-size:15px;line-height:15px;font-weight:400;color:#353a44;letter-spacing:-0.412px;white-space:nowrap;">Save as Excel</div>
<div id="t18" style="position:absolute;left:241.4px;top:187.3px;font-size:14.5px;line-height:14.5px;font-weight:400;color:#9aa1aa;letter-spacing:0.394px;white-space:nowrap;">Report</div>
<div id="t19" style="position:absolute;left:352.5px;top:184.0px;font-size:20.5px;line-height:20.5px;font-weight:400;color:#262c3d;letter-spacing:0.810px;white-space:nowrap;-webkit-text-stroke:0.55px #262c3d;">Geofence Statistics / *General Report</div>
<div id="t20" style="position:absolute;left:242.3px;top:261.3px;font-size:14.5px;line-height:14.5px;font-weight:400;color:#9aa1aa;letter-spacing:0.216px;white-space:nowrap;">Period</div>
<div id="t21" style="position:absolute;left:353.0px;top:261.3px;font-size:14.5px;line-height:14.5px;font-weight:400;color:#2a2f3a;letter-spacing:0.175px;white-space:nowrap;-webkit-text-stroke:0.3px #2a2f3a;">01 Nov 2025 00:00 - 27 Nov 2025 11:14</div>
<div id="t22" style="position:absolute;left:242.3px;top:299.8px;font-size:14.5px;line-height:14.5px;font-weight:400;color:#9aa1aa;letter-spacing:0.058px;white-space:nowrap;">Geofence</div>
<div id="t23" style="position:absolute;left:353.0px;top:299.8px;font-size:14.5px;line-height:14.5px;font-weight:400;color:#2a2f3a;letter-spacing:0.212px;white-space:nowrap;-webkit-text-stroke:0.3px #2a2f3a;">Vileika_NW</div>
<div id="t24" style="position:absolute;left:1167.3px;top:261.5px;font-size:14.5px;line-height:14.5px;font-weight:400;color:#2a2f3a;letter-spacing:0.376px;white-space:nowrap;-webkit-text-stroke:0.3px #2a2f3a;">Report was created 27 Nov 2025 11:14</div>
<div id="t25" style="position:absolute;left:1275.4px;top:300.0px;font-size:14.5px;line-height:14.5px;font-weight:400;color:#2a2f3a;letter-spacing:0.421px;white-space:nowrap;-webkit-text-stroke:0.3px #2a2f3a;">Created by: OlegDemo</div>
<div id="t26" style="position:absolute;left:242.5px;top:379.2px;font-size:20.5px;line-height:20.5px;font-weight:400;color:#262c3d;letter-spacing:0.649px;white-space:nowrap;-webkit-text-stroke:0.55px #262c3d;">Geofence Details</div>
<div id="t27" style="position:absolute;left:259.5px;top:436.5px;font-size:14.5px;line-height:14.5px;font-weight:400;color:#9aa1aa;letter-spacing:0.414px;white-space:nowrap;">Asset name</div>
<div id="t28" style="position:absolute;left:728.2px;top:436.8px;font-size:14.5px;line-height:14.5px;font-weight:400;color:#9aa1aa;letter-spacing:0.663px;white-space:nowrap;">In / Out</div>
<div id="t29" style="position:absolute;left:1096.2px;top:436.8px;font-size:14.5px;line-height:14.5px;font-weight:400;color:#9aa1aa;letter-spacing:0.653px;white-space:nowrap;">Total time inside, h</div>
<div id="t30" style="position:absolute;left:259.5px;top:484.6px;font-size:14.5px;line-height:14.5px;font-weight:400;color:#2a2f3a;letter-spacing:0.114px;white-space:nowrap;-webkit-text-stroke:0.2px #2a2f3a;">VW_1 Imm</div>
<div id="t31" style="position:absolute;left:731.1px;top:484.6px;font-size:14.5px;line-height:14.5px;font-weight:400;color:#2a2f3a;letter-spacing:0.243px;white-space:nowrap;-webkit-text-stroke:0.25px #2a2f3a;">25 / 25</div>
<div id="t32" style="position:absolute;left:1144.2px;top:484.6px;font-size:14.5px;line-height:14.5px;font-weight:400;color:#2a2f3a;letter-spacing:0.051px;white-space:nowrap;-webkit-text-stroke:0.25px #2a2f3a;">29.24</div>
<div id="t33" style="position:absolute;left:259.5px;top:533.0px;font-size:14.5px;line-height:14.5px;font-weight:400;color:#2a2f3a;letter-spacing:0.114px;white-space:nowrap;-webkit-text-stroke:0.2px #2a2f3a;">VW_4 Imm</div>
<div id="t34" style="position:absolute;left:731.1px;top:533.0px;font-size:14.5px;line-height:14.5px;font-weight:400;color:#2a2f3a;letter-spacing:0.243px;white-space:nowrap;-webkit-text-stroke:0.25px #2a2f3a;">25 / 24</div>
<div id="t35" style="position:absolute;left:1148.2px;top:533.0px;font-size:14.5px;line-height:14.5px;font-weight:400;color:#2a2f3a;letter-spacing:0.089px;white-space:nowrap;-webkit-text-stroke:0.25px #2a2f3a;">65.2</div>
<div id="t36" style="position:absolute;left:259.5px;top:581.4px;font-size:14.5px;line-height:14.5px;font-weight:400;color:#2a2f3a;letter-spacing:0.114px;white-space:nowrap;-webkit-text-stroke:0.2px #2a2f3a;">VW_3 Imm</div>
<div id="t37" style="position:absolute;left:731.1px;top:581.4px;font-size:14.5px;line-height:14.5px;font-weight:400;color:#2a2f3a;letter-spacing:0.243px;white-space:nowrap;-webkit-text-stroke:0.25px #2a2f3a;">25 / 25</div>
<div id="t38" style="position:absolute;left:1144.2px;top:581.4px;font-size:14.5px;line-height:14.5px;font-weight:400;color:#2a2f3a;letter-spacing:0.051px;white-space:nowrap;-webkit-text-stroke:0.25px #2a2f3a;">40.46</div>
<div id="t39" style="position:absolute;left:259.5px;top:630.4px;font-size:14.5px;line-height:14.5px;font-weight:400;color:#2a2f3a;letter-spacing:0.566px;white-space:nowrap;-webkit-text-stroke:0.5px #2a2f3a;">Total:</div>
<div id="t40" style="position:absolute;left:731.1px;top:630.4px;font-size:14.5px;line-height:14.5px;font-weight:400;color:#2a2f3a;letter-spacing:0.243px;white-space:nowrap;-webkit-text-stroke:0.25px #2a2f3a;">75 / 74</div>
<div id="t41" style="position:absolute;left:1144.2px;top:630.4px;font-size:14.5px;line-height:14.5px;font-weight:400;color:#2a2f3a;letter-spacing:0.051px;white-space:nowrap;-webkit-text-stroke:0.25px #2a2f3a;">134.9</div>
<div id="t42" style="position:absolute;left:226.2px;top:690.5px;font-size:19.5px;line-height:19.5px;font-weight:400;color:#b00000;letter-spacing:1.434px;white-space:nowrap;-webkit-text-stroke:0.35px #b00000;">Для просмотра детализированной информации</div>
<div id="t43" style="position:absolute;left:226.2px;top:714.7px;font-size:19.5px;line-height:19.5px;font-weight:400;color:#b00000;letter-spacing:1.633px;white-space:nowrap;-webkit-text-stroke:0.35px #b00000;">по Событию кликните его строку</div>
<div id="t44" style="position:absolute;left:242.3px;top:754.8px;font-size:20.5px;line-height:20.5px;font-weight:400;color:#262c3d;letter-spacing:0.531px;white-space:nowrap;-webkit-text-stroke:0.55px #262c3d;">Geofence Events</div>
<div id="t45" style="position:absolute;left:266.6px;top:804.8px;font-size:14px;line-height:14px;font-weight:400;color:#b7bbc1;letter-spacing:-0.004px;white-space:nowrap;">Search...</div>
<div id="t46" style="position:absolute;left:293.7px;top:861.4px;font-size:15px;line-height:15px;font-weight:400;color:#353a45;letter-spacing:-0.270px;white-space:nowrap;-webkit-text-stroke:0.25px #353a45;">VW_1 Imm</div>
<div id="t47" style="position:absolute;left:486.3px;top:852.9px;font-size:13px;line-height:13px;font-weight:400;color:#5b6069;letter-spacing:-0.263px;white-space:nowrap;">01 Nov 2025</div>
<div id="t48" style="position:absolute;left:526.4px;top:872.0px;font-size:13px;line-height:13px;font-weight:400;color:#5b6069;letter-spacing:-0.387px;white-space:nowrap;">08:51</div>
<div id="t49" style="position:absolute;left:293.7px;top:913.2px;font-size:15px;line-height:15px;font-weight:400;color:#353a45;letter-spacing:-0.270px;white-space:nowrap;-webkit-text-stroke:0.25px #353a45;">VW_4 Imm</div>
<div id="t50" style="position:absolute;left:486.3px;top:904.7px;font-size:13px;line-height:13px;font-weight:400;color:#5b6069;letter-spacing:-0.263px;white-space:nowrap;">01 Nov 2025</div>
<div id="t51" style="position:absolute;left:526.4px;top:923.8px;font-size:13px;line-height:13px;font-weight:400;color:#5b6069;letter-spacing:-0.387px;white-space:nowrap;">08:55</div>
<div id="t52" style="position:absolute;left:293.7px;top:965.0px;font-size:15px;line-height:15px;font-weight:400;color:#353a45;letter-spacing:-0.270px;white-space:nowrap;-webkit-text-stroke:0.25px #353a45;">VW_3 Imm</div>
<div id="t53" style="position:absolute;left:486.3px;top:956.5px;font-size:13px;line-height:13px;font-weight:400;color:#5b6069;letter-spacing:-0.263px;white-space:nowrap;">01 Nov 2025</div>
<div id="t54" style="position:absolute;left:526.4px;top:975.6px;font-size:13px;line-height:13px;font-weight:400;color:#5b6069;letter-spacing:-0.387px;white-space:nowrap;">09:03</div>
<div id="t55" style="position:absolute;left:293.7px;top:1016.8px;font-size:15px;line-height:15px;font-weight:400;color:#353a45;letter-spacing:-0.270px;white-space:nowrap;-webkit-text-stroke:0.25px #353a45;">VW_1 Imm</div>
<div id="t56" style="position:absolute;left:486.3px;top:1008.3px;font-size:13px;line-height:13px;font-weight:400;color:#5b6069;letter-spacing:-0.263px;white-space:nowrap;">01 Nov 2025</div>
<div id="t57" style="position:absolute;left:526.4px;top:1027.4px;font-size:13px;line-height:13px;font-weight:400;color:#5b6069;letter-spacing:-0.387px;white-space:nowrap;">10:01</div>
<div id="t58" style="position:absolute;left:293.7px;top:1068.6px;font-size:15px;line-height:15px;font-weight:400;color:#353a45;letter-spacing:-0.270px;white-space:nowrap;-webkit-text-stroke:0.25px #353a45;">VW_3 Imm</div>
<div id="t59" style="position:absolute;left:486.3px;top:1060.1px;font-size:13px;line-height:13px;font-weight:400;color:#5b6069;letter-spacing:-0.263px;white-space:nowrap;">01 Nov 2025</div>
<div id="t60" style="position:absolute;left:526.4px;top:1079.2px;font-size:13px;line-height:13px;font-weight:400;color:#5b6069;letter-spacing:-0.387px;white-space:nowrap;">10:41</div>
<div id="t61" style="position:absolute;left:293.7px;top:1120.4px;font-size:15px;line-height:15px;font-weight:400;color:#353a45;letter-spacing:-0.270px;white-space:nowrap;-webkit-text-stroke:0.25px #353a45;">VW_4 Imm</div>
<div id="t62" style="position:absolute;left:486.3px;top:1111.9px;font-size:13px;line-height:13px;font-weight:400;color:#5b6069;letter-spacing:-0.263px;white-space:nowrap;">01 Nov 2025</div>
<div id="t63" style="position:absolute;left:526.4px;top:1131.0px;font-size:13px;line-height:13px;font-weight:400;color:#5b6069;letter-spacing:-0.145px;white-space:nowrap;">11:38</div>
<div id="t64" style="position:absolute;left:293.7px;top:1231.0px;font-size:15px;line-height:15px;font-weight:400;color:#353a45;letter-spacing:-0.270px;white-space:nowrap;-webkit-text-stroke:0.25px #353a45;">VW_1 Imm</div>
<div id="t65" style="position:absolute;left:486.3px;top:1222.5px;font-size:13px;line-height:13px;font-weight:400;color:#5b6069;letter-spacing:-0.263px;white-space:nowrap;">02 Nov 2025</div>
<div id="t66" style="position:absolute;left:526.4px;top:1241.6px;font-size:13px;line-height:13px;font-weight:400;color:#5b6069;letter-spacing:-0.387px;white-space:nowrap;">08:51</div>
<div id="t67" style="position:absolute;left:293.7px;top:1282.8px;font-size:15px;line-height:15px;font-weight:400;color:#353a45;letter-spacing:-0.270px;white-space:nowrap;-webkit-text-stroke:0.25px #353a45;">VW_4 Imm</div>
<div id="t68" style="position:absolute;left:486.3px;top:1274.3px;font-size:13px;line-height:13px;font-weight:400;color:#5b6069;letter-spacing:-0.263px;white-space:nowrap;">02 Nov 2025</div>
<div id="t69" style="position:absolute;left:526.4px;top:1293.4px;font-size:13px;line-height:13px;font-weight:400;color:#5b6069;letter-spacing:-0.387px;white-space:nowrap;">08:55</div>
<div id="t70" style="position:absolute;left:293.7px;top:1334.6px;font-size:15px;line-height:15px;font-weight:400;color:#353a45;letter-spacing:-0.270px;white-space:nowrap;-webkit-text-stroke:0.25px #353a45;">VW_3 Imm</div>
<div id="t71" style="position:absolute;left:486.3px;top:1326.1px;font-size:13px;line-height:13px;font-weight:400;color:#5b6069;letter-spacing:-0.263px;white-space:nowrap;">02 Nov 2025</div>
<div id="t72" style="position:absolute;left:526.4px;top:1345.2px;font-size:13px;line-height:13px;font-weight:400;color:#5b6069;letter-spacing:-0.387px;white-space:nowrap;">09:03</div>
<div id="t73" style="position:absolute;left:293.7px;top:1386.4px;font-size:15px;line-height:15px;font-weight:400;color:#353a45;letter-spacing:-0.270px;white-space:nowrap;-webkit-text-stroke:0.25px #353a45;">VW_1 Imm</div>
<div id="t74" style="position:absolute;left:486.3px;top:1377.9px;font-size:13px;line-height:13px;font-weight:400;color:#5b6069;letter-spacing:-0.263px;white-space:nowrap;">02 Nov 2025</div>
<div id="t75" style="position:absolute;left:526.4px;top:1397.0px;font-size:13px;line-height:13px;font-weight:400;color:#5b6069;letter-spacing:-0.387px;white-space:nowrap;">10:01</div>
<div id="t76" style="position:absolute;left:293.7px;top:1438.2px;font-size:15px;line-height:15px;font-weight:400;color:#353a45;letter-spacing:-0.270px;white-space:nowrap;-webkit-text-stroke:0.25px #353a45;">VW_3 Imm</div>
<div id="t77" style="position:absolute;left:486.3px;top:1429.7px;font-size:13px;line-height:13px;font-weight:400;color:#5b6069;letter-spacing:-0.263px;white-space:nowrap;">02 Nov 2025</div>
<div id="t78" style="position:absolute;left:526.4px;top:1448.8px;font-size:13px;line-height:13px;font-weight:400;color:#5b6069;letter-spacing:-0.387px;white-space:nowrap;">10:41</div>
<div id="t79" style="position:absolute;left:293.7px;top:1490.0px;font-size:15px;line-height:15px;font-weight:400;color:#353a45;letter-spacing:-0.270px;white-space:nowrap;-webkit-text-stroke:0.25px #353a45;">VW_4 Imm</div>
<div id="t80" style="position:absolute;left:486.3px;top:1481.5px;font-size:13px;line-height:13px;font-weight:400;color:#5b6069;letter-spacing:-0.263px;white-space:nowrap;">02 Nov 2025</div>
<div id="t81" style="position:absolute;left:526.4px;top:1500.6px;font-size:13px;line-height:13px;font-weight:400;color:#5b6069;letter-spacing:-0.145px;white-space:nowrap;">11:38</div>
<div id="t82" style="position:absolute;left:293.7px;top:1541.8px;font-size:15px;line-height:15px;font-weight:400;color:#353a45;letter-spacing:-0.270px;white-space:nowrap;-webkit-text-stroke:0.25px #353a45;">VW_1 Imm</div>
<div id="t83" style="position:absolute;left:486.3px;top:1533.3px;font-size:13px;line-height:13px;font-weight:400;color:#5b6069;letter-spacing:-0.263px;white-space:nowrap;">03 Nov 2025</div>
<div id="t84" style="position:absolute;left:526.4px;top:1552.4px;font-size:13px;line-height:13px;font-weight:400;color:#5b6069;letter-spacing:-0.387px;white-space:nowrap;">08:51</div>
<div id="t85" style="position:absolute;left:293.7px;top:1593.6px;font-size:15px;line-height:15px;font-weight:400;color:#353a45;letter-spacing:-0.270px;white-space:nowrap;-webkit-text-stroke:0.25px #353a45;">VW_4 Imm</div>
<div id="t86" style="position:absolute;left:486.3px;top:1585.1px;font-size:13px;line-height:13px;font-weight:400;color:#5b6069;letter-spacing:-0.263px;white-space:nowrap;">03 Nov 2025</div>
<div id="t87" style="position:absolute;left:526.4px;top:1604.2px;font-size:13px;line-height:13px;font-weight:400;color:#5b6069;letter-spacing:-0.387px;white-space:nowrap;">08:55</div>
<div id="t88" style="position:absolute;left:293.7px;top:1645.4px;font-size:15px;line-height:15px;font-weight:400;color:#353a45;letter-spacing:-0.270px;white-space:nowrap;-webkit-text-stroke:0.25px #353a45;">VW_3 Imm</div>
<div id="t89" style="position:absolute;left:486.3px;top:1636.9px;font-size:13px;line-height:13px;font-weight:400;color:#5b6069;letter-spacing:-0.263px;white-space:nowrap;">03 Nov 2025</div>
<div id="t90" style="position:absolute;left:526.4px;top:1656.0px;font-size:13px;line-height:13px;font-weight:400;color:#5b6069;letter-spacing:-0.387px;white-space:nowrap;">09:03</div>
<div id="t91" style="position:absolute;left:404.7px;top:1163.4px;font-size:12.5px;line-height:12.5px;font-weight:400;color:#a6abb2;letter-spacing:0.379px;white-space:nowrap;">Latitude:</div>
<div id="t92" style="position:absolute;left:504.4px;top:1163.4px;font-size:12.5px;line-height:12.5px;font-weight:400;color:#a6abb2;letter-spacing:0.166px;white-space:nowrap;">54.47977</div>
<div id="t93" style="position:absolute;left:404.7px;top:1190.4px;font-size:12.5px;line-height:12.5px;font-weight:400;color:#a6abb2;letter-spacing:0.345px;white-space:nowrap;">Longitude:</div>
<div id="t94" style="position:absolute;left:511.7px;top:1190.4px;font-size:12.5px;line-height:12.5px;font-weight:400;color:#a6abb2;letter-spacing:0.135px;white-space:nowrap;">26.9215</div>
<div id="t95" style="position:absolute;left:654.4px;top:762.1px;font-size:19.5px;line-height:19.5px;font-weight:400;color:#b00000;letter-spacing:1.434px;white-space:nowrap;-webkit-text-stroke:0.35px #b00000;">Поля фильтрации Событий въезда/выезда</div>
<div id="t96" style="position:absolute;left:242.3px;top:1784.2px;font-size:20.5px;line-height:20.5px;font-weight:400;color:#262c3d;letter-spacing:0.660px;white-space:nowrap;-webkit-text-stroke:0.55px #262c3d;">Geofence Statistics</div>
<div id="t97" style="position:absolute;left:382.1px;top:1849.9px;font-size:17px;line-height:17px;font-weight:400;color:#2a2f3a;letter-spacing:0.294px;white-space:nowrap;-webkit-text-stroke:0.3px #2a2f3a;">Total assets</div>
<div id="t98" style="position:absolute;left:421.6px;top:1883.4px;font-size:25px;line-height:25px;font-weight:400;color:#262c3d;letter-spacing:0.000px;white-space:nowrap;-webkit-text-stroke:0.5px #262c3d;">3</div>
<div id="t99" style="position:absolute;left:779.6px;top:1849.9px;font-size:17px;line-height:17px;font-weight:400;color:#2a2f3a;letter-spacing:0.554px;white-space:nowrap;-webkit-text-stroke:0.3px #2a2f3a;">Total entrance</div>
<div id="t100" style="position:absolute;left:823.1px;top:1883.4px;font-size:25px;line-height:25px;font-weight:400;color:#262c3d;letter-spacing:-0.812px;white-space:nowrap;-webkit-text-stroke:0.5px #262c3d;">75</div>
<div id="t101" style="position:absolute;left:1204.2px;top:1849.9px;font-size:17px;line-height:17px;font-weight:400;color:#2a2f3a;letter-spacing:0.491px;white-space:nowrap;-webkit-text-stroke:0.3px #2a2f3a;">Total exits</div>
<div id="t102" style="position:absolute;left:1231.0px;top:1883.4px;font-size:25px;line-height:25px;font-weight:400;color:#262c3d;letter-spacing:-0.812px;white-space:nowrap;-webkit-text-stroke:0.5px #262c3d;">74</div>
<div id="t103" style="position:absolute;left:830.3px;top:1770.5px;font-size:19.5px;line-height:19.5px;font-weight:400;color:#b00000;letter-spacing:1.441px;white-space:nowrap;-webkit-text-stroke:0.35px #b00000;">Место пересечения границы Геозоны</div>
<div id="t104" style="position:absolute;left:830.3px;top:1793.7px;font-size:19.5px;line-height:19.5px;font-weight:400;color:#b00000;letter-spacing:1.343px;white-space:nowrap;-webkit-text-stroke:0.35px #b00000;">для выбранного События</div>
<div id="t105" style="position:absolute;left:704.0px;top:811.6px;font-size:17px;line-height:17px;font-weight:400;color:#9ea3aa;letter-spacing:-0.188px;white-space:nowrap;-webkit-text-stroke:0.4px #9ea3aa;">In</div>
<div id="t106" style="position:absolute;left:782.0px;top:811.6px;font-size:17px;line-height:17px;font-weight:400;color:#9ea3aa;letter-spacing:0.797px;white-space:nowrap;-webkit-text-stroke:0.4px #9ea3aa;">Out</div>
<div id="t107" style="position:absolute;left:859.0px;top:811.8px;font-size:15px;line-height:15px;font-weight:400;color:#3a3f48;letter-spacing:-0.102px;white-space:nowrap;">OSM standard</div>
</body></html>
